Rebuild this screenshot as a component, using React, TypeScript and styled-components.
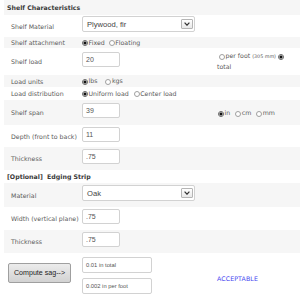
import React from 'react';
import styled, { createGlobalStyle, css } from 'styled-components';

const Global = createGlobalStyle`
  html, body { margin: 0; padding: 0; background: #fff; }
  body {
    font-family: "DejaVu Sans", Verdana, sans-serif;
    font-size: 6.25px;
    color: #5a5a5a;
  }
`;

const Page = styled.div`
  width: 300px;
  height: 297px;
  overflow: hidden;
  padding-left: 4px;
  box-sizing: border-box;
`;

const stripe = css`
  &:nth-child(odd) { background: #f6f6f6; }
`;

const Row = styled.div<{ $h: number }>`
  display: grid;
  grid-template-columns: 78px 135px 1fr;
  align-items: center;
  height: ${p => p.$h}px;
  ${stripe}
`;

const TitleRow = styled.div<{ $h: number }>`
  display: flex;
  align-items: center;
  height: ${p => p.$h}px;
  padding-left: 3px;
  font-weight: bold;
  color: #3a3a3a;
  white-space: pre;
  ${stripe}
`;

const Label = styled.div`
  padding-left: 7px;
  white-space: nowrap;
`;

const Cell = styled.div`
  display: flex;
  align-items: center;
  white-space: nowrap;
`;

const Extra = styled.div<{ $pt?: number }>`
  line-height: 10px;
  padding-top: ${p => p.$pt ?? 0}px;
`;

const TextInput = styled.div<{ $w: number }>`
  box-sizing: border-box;
  width: ${p => p.$w}px;
  height: 15px;
  margin-bottom: 4px;
  border: 1px solid #d2d2d2;
  border-radius: 2px;
  background: #fff;
  padding-left: 3px;
  display: flex;
  align-items: center;
  font-family: "Liberation Sans", Arial, sans-serif;
  font-size: 7px;
  color: #555;
`;

const ResultStack = styled.div`
  display: flex;
  flex-direction: column;
  gap: 5px;
`;

const ResultInput = styled.div`
  box-sizing: border-box;
  width: 70px;
  height: 16px;
  border: 1px solid #d2d2d2;
  border-radius: 2px;
  background: #fff;
  padding-left: 3px;
  display: flex;
  align-items: center;
  font-family: "Liberation Sans", Arial, sans-serif;
  font-size: 5.8px;
  color: #555;
`;

const SelectBox = styled.div`
  box-sizing: border-box;
  width: 113px;
  height: 16px;
  margin-bottom: 4px;
  border: 1px solid #d2d2d2;
  border-radius: 2px;
  background: #fff;
  padding: 0 1px 0 4px;
  display: flex;
  align-items: center;
  justify-content: space-between;
  font-family: "Liberation Sans", Arial, sans-serif;
  font-size: 7.6px;
  color: #444;
`;

const ArrowBox = styled.div`
  box-sizing: border-box;
  width: 12px;
  height: 10px;
  border: 1px solid #b5b5b5;
  border-radius: 1px;
  background: linear-gradient(#ffffff, #e8e8e8);
  display: flex;
  align-items: center;
  justify-content: center;
`;

const Radio = styled.span<{ $on?: boolean }>`
  display: inline-block;
  box-sizing: border-box;
  width: 6px;
  height: 6px;
  border-radius: 50%;
  border: 1px solid ${p => (p.$on ? '#666' : '#a0a0a0')};
  background: ${p => (p.$on ? 'radial-gradient(circle, #111 0 1.3px, #fff 1.8px)' : '#fff')};
  vertical-align: -1.5px;
  margin: 0 0.5px 0 0;
`;

const Opt = styled.span<{ $mr?: number }>`
  display: inline-block;
  margin-right: ${p => p.$mr ?? 0}px;
`;

const Small = styled.span`
  font-size: 4.8px;
`;

const Button = styled.div`
  box-sizing: border-box;
  width: 63px;
  height: 20px;
  margin-left: 4px;
  margin-bottom: 4px;
  border: 1px solid #9f9f9f;
  border-radius: 2px;
  background: linear-gradient(#ececec, #d2d2d2);
  display: flex;
  align-items: center;
  justify-content: center;
  font-family: "Liberation Sans", Arial, sans-serif;
  font-size: 7.1px;
  color: #222;
`;

const Verdict = styled.div`
  padding-top: 6px;
  color: #4545f0;
  letter-spacing: 0.1px;
`;

const Select = ({ value }: { value: string }) => (
  <SelectBox>
    <span>{value}</span>
    <ArrowBox>
      <svg width="6" height="4" viewBox="0 0 6 4">
        <path d="M0.6 0.6 L3 3.2 L5.4 0.6" fill="none" stroke="#333" strokeWidth="1.2" />
      </svg>
    </ArrowBox>
  </SelectBox>
);

export default function App() {
  return (
    <Page>
      <Global />
      <TitleRow $h={15}>Shelf Characteristics</TitleRow>
      <Row $h={22}>
        <Label>Shelf Material</Label>
        <Cell><Select value="Plywood, fir" /></Cell>
      </Row>
      <Row $h={11}>
        <Label>Shelf attachment</Label>
        <Cell>
          <Opt $mr={4}><Radio $on />Fixed</Opt>
          <Opt><Radio />Floating</Opt>
        </Cell>
      </Row>
      <Row $h={27}>
        <Label>Shelf load</Label>
        <Cell><TextInput $w={38}>20</TextInput></Cell>
        <Extra>
          <Radio style={{ marginLeft: 2 }} />per foot <Small>(305 mm)</Small>{'  '}<Radio $on /> total
        </Extra>
      </Row>
      <Row $h={12}>
        <Label>Load units</Label>
        <Cell>
          <Opt $mr={8}><Radio $on />lbs</Opt>
          <Opt><Radio />kgs</Opt>
        </Cell>
      </Row>
      <Row $h={13}>
        <Label>Load distribution</Label>
        <Cell>
          <Opt $mr={5}><Radio $on />Uniform load</Opt>
          <Opt><Radio />Center load</Opt>
        </Cell>
      </Row>
      <Row $h={25}>
        <Label>Shelf span</Label>
        <Cell><TextInput $w={38}>39</TextInput></Cell>
        <Extra $pt={1}>
          <Opt $mr={5} style={{ marginLeft: 1 }}><Radio $on />in</Opt>
          <Opt $mr={5}><Radio />cm</Opt>
          <Opt><Radio />mm</Opt>
        </Extra>
      </Row>
      <Row $h={22}>
        <Label>Depth (front to back)</Label>
        <Cell><TextInput $w={38}>11</TextInput></Cell>
      </Row>
      <Row $h={23}>
        <Label>Thickness</Label>
        <Cell><TextInput $w={38}>.75</TextInput></Cell>
      </Row>
      <TitleRow $h={13}>{'[Optional]\u00a0 Edging Strip'}</TitleRow>
      <Row $h={24}>
        <Label>Material</Label>
        <Cell><Select value="Oak" /></Cell>
      </Row>
      <Row $h={23}>
        <Label>Width (vertical plane)</Label>
        <Cell><TextInput $w={38}>.75</TextInput></Cell>
      </Row>
      <Row $h={23}>
        <Label>Thickness</Label>
        <Cell><TextInput $w={38}>.75</TextInput></Cell>
      </Row>
      <Row $h={44}>
        <Cell><Button>Compute sag--&gt;</Button></Cell>
        <Cell>
          <ResultStack>
            <ResultInput>0.01 in total</ResultInput>
            <ResultInput>0.002 in per foot</ResultInput>
          </ResultStack>
        </Cell>
        <Verdict>ACCEPTABLE</Verdict>
      </Row>
    </Page>
  );
}
